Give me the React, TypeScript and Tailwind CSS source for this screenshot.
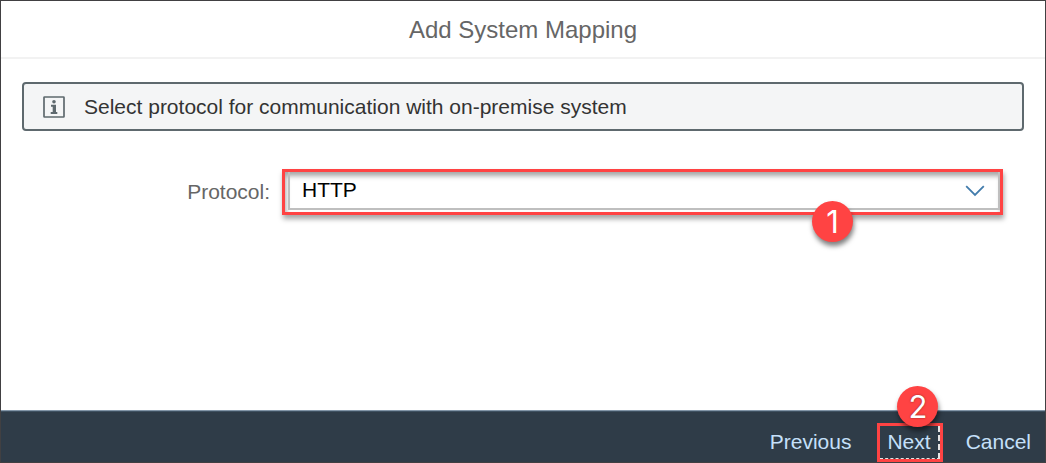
import { useState } from "react";

function Badge({ value, className }: { value: number; className: string }) {
  return (
    <span
      className={`pointer-events-none absolute flex size-[41px] items-center justify-center rounded-full bg-[#ff4343] font-['Inter','Liberation_Sans',sans-serif] text-[31px] leading-none text-white shadow-[1px_4px_5px_rgba(0,0,0,0.5)] ${className}`}
    >
      {value}
    </span>
  );
}

function InfoIcon() {
  return (
    <svg className="size-[22px] shrink-0" viewBox="0 0 22 22" fill="none" aria-hidden="true">
      <rect x="1" y="1" width="20" height="20" rx="0.5" stroke="#5e696e" strokeWidth="1.7" />
      <circle cx="11" cy="5.8" r="1.8" fill="#5e696e" />
      <path d="M8 8.800h5v7.300h1.300V18H7.700v-1.900h2v-5.400H8z" fill="#5e696e" />
    </svg>
  );
}

function ProtocolSelect() {
  const [protocol, setProtocol] = useState("HTTP");
  return (
    <div className="relative border-3 border-[#ff4343] pb-[2px] pl-[3px] shadow-[1px_4px_5px_rgba(0,0,0,0.35),inset_1px_4px_5px_rgba(0,0,0,0.35)]">
      <select
        id="protocol"
        value={protocol}
        onChange={(e) => setProtocol(e.target.value)}
        className="block h-[38px] w-full appearance-none border-2 border-t-0 border-[#bfbfbf] bg-transparent pl-3 text-[21px] leading-6 text-black outline-none"
      >
        <option>HTTP</option>
        <option>HTTPS</option>
      </select>
      <svg
        className="pointer-events-none absolute top-[13px] right-[15px] h-3 w-5"
        viewBox="0 0 20 12"
        fill="none"
        stroke="#427cac"
        strokeWidth="1.8"
        aria-hidden="true"
      >
        <path d="M1.200 1.200 10 10l8.800-8.800" />
      </svg>
      <Badge value={1} className="top-[29px] right-[147px]" />
    </div>
  );
}

export default function App() {
  return (
    <div className="flex min-h-screen flex-col border border-[#414042] bg-white font-['Liberation_Sans',Arial,sans-serif] text-[21px] leading-6">
      <header className="border-b-2 border-[#f2f2f2] pt-[15px] pb-[13px] text-center">
        <h1 className="text-[24px] leading-7 text-[#666]">Add System Mapping</h1>
      </header>

      <main className="flex-1 px-[21px] pt-[23px]">
        <div
          role="status"
          className="flex h-[49px] items-center gap-[19px] rounded-[4px] border-2 border-[#5e696e] bg-[#f4f5f6] px-[19px] text-[#333]"
        >
          <InfoIcon />
          <p>Select protocol for communication with on-premise system</p>
        </div>

        <div className="mt-[38px] grid grid-cols-[248px_1fr] items-center gap-3 pr-[21px]">
          <label htmlFor="protocol" className="text-right text-[#666]">
            Protocol:
          </label>
          <ProtocolSelect />
        </div>
      </main>

      <footer className="flex h-[52px] items-center justify-end border-t border-[#8396a8] bg-[#2f3c48] pt-[11px] pr-[14px] text-[#c5e0fa] shadow-[inset_0_1px_0_#3f5161] [text-shadow:0_0_2px_rgba(0,0,0,0.5)]">
        <button type="button">Previous</button>
        <div className="relative mr-[23px] ml-[26px] border-3 border-[#ff4343]">
          <button
            type="button"
            className="block border-r-2 border-b border-dashed border-[#e5e5e5] px-[7px] py-1"
          >
            Next
          </button>
          <Badge value={2} className="-top-[40px] left-[17px]" />
        </div>
        <button type="button">Cancel</button>
      </footer>
    </div>
  );
}
